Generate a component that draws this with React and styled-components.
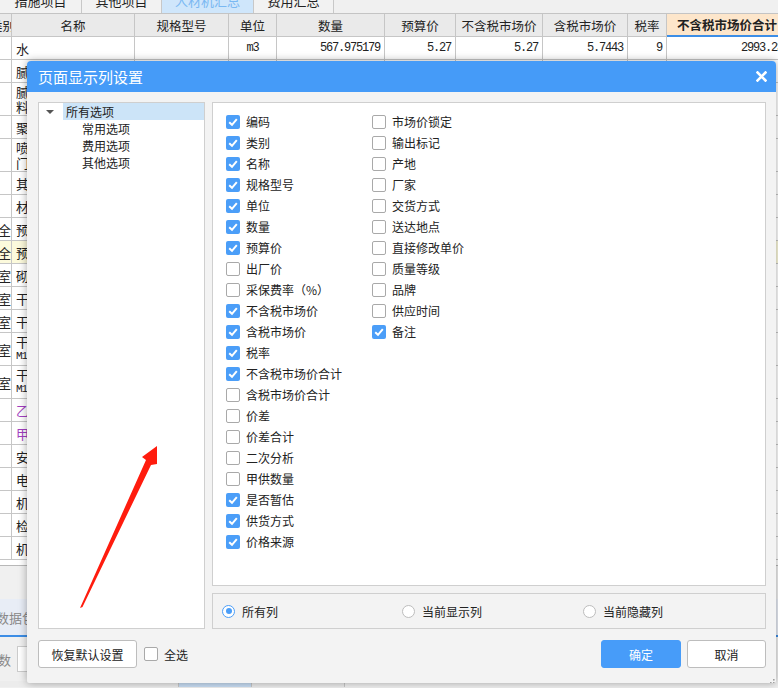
import styled, { createGlobalStyle } from "styled-components";

const GlobalStyle = createGlobalStyle`
  html, body {
    margin: 0;
    padding: 0;
    background: #f0f0f0;
  }
  body {
    font-family: "Noto Sans CJK SC", "Noto Sans", sans-serif;
    font-size: 12px;
    color: #222;
  }
`;

const COLS = "12px 123px 94px 48px 108px 71px 87px 85px 39px 121px";

const tabs = [
  { text: "措施项目", w: 82 },
  { text: "其他项目", w: 80 },
  { text: "人材机汇总", w: 92, active: true },
  { text: "费用汇总", w: 80 },
];

const headers = ["类别", "名称", "规格型号", "单位", "数量", "预算价", "不含税市场价", "含税市场价", "税率", "不含税市场价合计"];

const rows = [
  { code: "", name: ["水"], unit: "m3", qty: "567.975179", p1: "5.27", p2: "5.27", p3: "5.7443", tax: "9", total: "2993.23" },
  { code: "", name: ["腻子粉"] },
  { code: "", name: ["腻子粉", "料"], tall: true },
  { code: "", name: ["聚合物"] },
  { code: "", name: ["喷塑", "门"], tall: true },
  { code: "", name: ["其他"] },
  { code: "", name: ["材料"] },
  { code: "安全", name: ["预拌"] },
  { code: "安全", name: ["预拌"], yellow: true },
  { code: "砌筑室", name: ["砌块"] },
  { code: "砌筑室", name: ["干混"] },
  { code: "砌筑室", name: ["干混"] },
  { code: "砌筑室", name: ["干混", "M10"], tall: true },
  { code: "砌筑室", name: ["干混", "M10"], tall: true },
  { code: "", name: ["乙供"], purple: true },
  { code: "", name: ["甲供"], purple: true },
  { code: "", name: ["安全"] },
  { code: "", name: ["电"] },
  { code: "", name: ["机械"] },
  { code: "", name: ["检测"] },
  { code: "", name: ["机械"] },
];

const leftOptions = [
  ["编码", true],
  ["类别", true],
  ["名称", true],
  ["规格型号", true],
  ["单位", true],
  ["数量", true],
  ["预算价", true],
  ["出厂价", false],
  ["采保费率（%）", false],
  ["不含税市场价", true],
  ["含税市场价", true],
  ["税率", true],
  ["不含税市场价合计", true],
  ["含税市场价合计", false],
  ["价差", false],
  ["价差合计", false],
  ["二次分析", false],
  ["甲供数量", false],
  ["是否暂估", true],
  ["供货方式", true],
  ["价格来源", true],
];

const rightOptions = [
  ["市场价锁定", false],
  ["输出标记", false],
  ["产地", false],
  ["厂家", false],
  ["交货方式", false],
  ["送达地点", false],
  ["直接修改单价", false],
  ["质量等级", false],
  ["品牌", false],
  ["供应时间", false],
  ["备注", true],
];

const Check = ({ checked }) => (
  <Box $checked={checked}>
    {checked && (
      <svg width="14" height="14" viewBox="0 0 14 14">
        <polyline points="3.2,7.2 6,9.8 10.8,4.2" fill="none" stroke="#fff" strokeWidth="2" />
      </svg>
    )}
  </Box>
);

const App = () => {
  return (
    <>
      <GlobalStyle />
      <Page>
        <TabBar>
          {tabs.map((t) => (
            <Tab key={t.text} $w={t.w} $active={t.active}>
              <span>{t.text}</span>
            </Tab>
          ))}
          <TabFill />
        </TabBar>

        <Grid>
          <HeadRow>
            {headers.map((h, i) => (
              <HeadCell key={h} $hl={i === headers.length - 1} $clip={i === 0}>
                <span>{h}</span>
              </HeadCell>
            ))}
          </HeadRow>
          {rows.map((r, i) => (
            <Row key={i} $tall={r.tall} $yellow={r.yellow}>
              <Cell $right $clip>
                {r.code}
              </Cell>
              <Cell $purple={r.purple}>
                <Lines>
                  {r.name.map((n, j) => (
                    <span key={j} className={/^[A-Z0-9]/.test(n) ? "mono" : ""}>
                      {n}
                    </span>
                  ))}
                </Lines>
              </Cell>
              <Cell />
              <Cell $center $mono>
                {r.unit}
              </Cell>
              <Cell $right $mono>
                {r.qty}
              </Cell>
              <Cell $right $mono>
                {r.p1}
              </Cell>
              <Cell $right $mono>
                {r.p2}
              </Cell>
              <Cell $right $mono>
                {r.p3}
              </Cell>
              <Cell $right $mono>
                {r.tax}
              </Cell>
              <Cell $right $mono>
                {r.total}
              </Cell>
            </Row>
          ))}
        </Grid>

        <BottomArea>
          <Spacer />
          <PackBar>
            <span>数据包</span>
          </PackBar>
          <ParamRow>
            <span>数</span>
            <SmallInput />
          </ParamRow>
          <BottomTabs>
            <BottomTab $w={178} />
            <BottomTab $w={72} $active />
            <BottomTab $w={92} />
          </BottomTabs>
        </BottomArea>

        <Dialog>
          <TitleBar>
            <span>页面显示列设置</span>
            <CloseBtn>
              <svg width="11" height="11" viewBox="0 0 11 11">
                <path d="M1.5 1.5 L9.5 9.5 M9.5 1.5 L1.5 9.5" stroke="#fff" strokeWidth="2.6" strokeLinecap="square" />
              </svg>
            </CloseBtn>
          </TitleBar>
          <Body>
            <Main>
              <TreePanel>
                <TreeRoot>
                  <Caret />
                  <TreeLabel>所有选项</TreeLabel>
                </TreeRoot>
                <TreeChild>常用选项</TreeChild>
                <TreeChild>费用选项</TreeChild>
                <TreeChild>其他选项</TreeChild>
              </TreePanel>
              <RightSide>
                <OptionPanel>
                  <OptionColumn $w={146}>
                    {leftOptions.map(([label, on]) => (
                      <OptionRow key={label}>
                        <Check checked={on} />
                        <span>{label}</span>
                      </OptionRow>
                    ))}
                  </OptionColumn>
                  <OptionColumn>
                    {rightOptions.map(([label, on]) => (
                      <OptionRow key={label}>
                        <Check checked={on} />
                        <span>{label}</span>
                      </OptionRow>
                    ))}
                  </OptionColumn>
                </OptionPanel>
                <RadioPanel>
                  <RadioItem $w={180}>
                    <Radio $on />
                    <span>所有列</span>
                  </RadioItem>
                  <RadioItem $w={181}>
                    <Radio />
                    <span>当前显示列</span>
                  </RadioItem>
                  <RadioItem>
                    <Radio />
                    <span>当前隐藏列</span>
                  </RadioItem>
                </RadioPanel>
              </RightSide>
            </Main>
            <Footer>
              <Button $w={99}>恢复默认设置</Button>
              <SelectAll>
                <Check checked={false} />
                <span>全选</span>
              </SelectAll>
              <FooterRight>
                <Button $w={80} $primary>
                  确定
                </Button>
                <Button $w={79}>取消</Button>
              </FooterRight>
            </Footer>
          </Body>
          <Grip>
            <svg width="9" height="9" viewBox="0 0 9 9">
              {[
                [7, 1],
                [4, 4],
                [7, 4],
                [1, 7],
                [4, 7],
                [7, 7],
              ].map(([x, y]) => (
                <rect key={`${x}-${y}`} x={x} y={y} width="1.6" height="1.6" fill="#a0a0a0" />
              ))}
            </svg>
          </Grip>
        </Dialog>

        <Arrow width="778" height="688" viewBox="0 0 778 688">
          <polygon points="80,608 82.5,607 151,465 157,464 157,446 142,457 146,460" fill="#ff1c0e" />
        </Arrow>
      </Page>
    </>
  );
};

export default App;

const Page = styled.div`
  position: relative;
  width: 778px;
  height: 688px;
  overflow: hidden;
  background: #f0f0f0;
  display: flex;
  flex-direction: column;
`;

const TabBar = styled.div`
  display: flex;
  height: 13px;
  border-bottom: 1px solid #c4c4c4;
  background: #f0f0f0;
`;

const Tab = styled.div`
  width: ${(p) => p.$w}px;
  box-sizing: border-box;
  border-right: 1px solid #c8c8c8;
  overflow: hidden;
  background: ${(p) => (p.$active ? "#cfe6fb" : "#f2f2f2")};
  color: ${(p) => (p.$active ? "#7ab8f2" : "#222")};
  text-align: center;
  font-size: 13px;
  span {
    display: block;
    margin-top: -9px;
    line-height: 20px;
  }
`;

const TabFill = styled.div`
  flex: 1;
  background: #f0f0f0;
`;

const Grid = styled.div`
  display: flex;
  flex-direction: column;
  background: #fff;
`;

const HeadRow = styled.div`
  display: grid;
  grid-template-columns: ${COLS};
  height: 23px;
`;

const HeadCell = styled.div`
  box-sizing: border-box;
  border-right: 1px solid #c6c6c6;
  border-bottom: ${(p) => (p.$hl ? "2px solid #3d8ee6" : "1px solid #c6c6c6")};
  background: ${(p) => (p.$hl ? "#fde6cb" : "#eaeaea")};
  font-weight: ${(p) => (p.$hl ? 700 : 400)};
  font-size: 12.5px;
  display: flex;
  align-items: center;
  justify-content: ${(p) => (p.$clip ? "flex-end" : "center")};
  overflow: hidden;
  white-space: nowrap;
  span {
    margin-right: ${(p) => (p.$clip ? "-4px" : "0")};
  }
`;

const Row = styled.div`
  display: grid;
  grid-template-columns: ${COLS};
  height: ${(p) => (p.$tall ? 33 : 23)}px;
  background: ${(p) => (p.$yellow ? "#fcfadc" : "#fff")};
`;

const Cell = styled.div`
  box-sizing: border-box;
  border-right: 1px solid #c6c6c6;
  border-bottom: 1px solid #c6c6c6;
  display: flex;
  align-items: center;
  justify-content: ${(p) => (p.$right ? "flex-end" : p.$center ? "center" : "flex-start")};
  padding: ${(p) => (p.$clip ? "0" : "0 4px")};
  overflow: hidden;
  white-space: nowrap;
  font-family: ${(p) =>
    p.$mono ? '"Liberation Mono", "DejaVu Sans Mono", monospace' : '"Noto Sans CJK SC", sans-serif'};
  letter-spacing: ${(p) => (p.$mono ? "-1.2px" : "0")};
  font-size: ${(p) => (p.$mono ? "12px" : "13px")};
  color: ${(p) => (p.$purple ? "#a23fc0" : "#222")};
`;

const Lines = styled.div`
  display: flex;
  flex-direction: column;
  line-height: 15px;
  .mono {
    font-family: "Liberation Mono", monospace;
    font-size: 11px;
    letter-spacing: -1px;
  }
`;

const BottomArea = styled.div`
  flex: 1;
  display: flex;
  flex-direction: column;
  background: #f0f0f0;
  border-top: 1px solid #fff;
`;

const Spacer = styled.div`
  height: 34px;
  border-top: 4px solid #fff;
  box-shadow: inset 0 1px 0 #b8b8b8;
`;

const PackBar = styled.div`
  height: 36px;
  background: #e8edf6;
  border-bottom: 2px solid #3c8de6;
  display: flex;
  align-items: center;
  color: #888;
  font-size: 13px;
  span {
    margin-left: -4px;
  }
`;

const ParamRow = styled.div`
  height: 44px;
  display: flex;
  align-items: center;
  gap: 6px;
  color: #888;
  font-size: 13px;
  span {
    margin-left: -2px;
  }
`;

const SmallInput = styled.div`
  width: 20px;
  height: 24px;
  background: #fff;
  border: 1px solid #ccc;
`;

const BottomTabs = styled.div`
  display: flex;
  height: 6px;
`;

const BottomTab = styled.div`
  width: ${(p) => p.$w}px;
  background: ${(p) => (p.$active ? "#c9def5" : "#ececec")};
  border-right: 1px solid #c8c8c8;
`;

const Dialog = styled.div`
  position: absolute;
  left: 27px;
  top: 61px;
  width: 749px;
  height: 622px;
  background: #f3f3f3;
  border-radius: 4px 4px 2px 2px;
  box-shadow: 0 0 8px rgba(0, 0, 0, 0.35);
  display: flex;
  flex-direction: column;
  overflow: hidden;
`;

const TitleBar = styled.div`
  height: 31px;
  background: #459bf8;
  color: #fff;
  display: flex;
  align-items: center;
  justify-content: space-between;
  padding: 0 9px 0 11px;
  font-size: 15px;
`;

const CloseBtn = styled.div`
  width: 11px;
  height: 11px;
  display: flex;
`;

const Body = styled.div`
  flex: 1;
  display: flex;
  flex-direction: column;
  padding: 10px 10px 0 11px;
`;

const Main = styled.div`
  display: flex;
  gap: 7px;
  height: 527px;
`;

const TreePanel = styled.div`
  width: 167px;
  box-sizing: border-box;
  background: #fff;
  border: 1px solid #cfcfcf;
  font-size: 12px;
  line-height: 17px;
`;

const TreeRoot = styled.div`
  display: flex;
  align-items: center;
  height: 17px;
`;

const Caret = styled.div`
  width: 0;
  height: 0;
  margin: 0 9px 0 7px;
  border-left: 4px solid transparent;
  border-right: 4px solid transparent;
  border-top: 4px solid #555;
`;

const TreeLabel = styled.div`
  flex: 1;
  height: 17px;
  background: #cce4f8;
  padding-left: 3px;
`;

const TreeChild = styled.div`
  padding-left: 43px;
  height: 17px;
`;

const RightSide = styled.div`
  flex: 1;
  display: flex;
  flex-direction: column;
  gap: 7px;
`;

const OptionPanel = styled.div`
  height: 484px;
  box-sizing: border-box;
  background: #fff;
  border: 1px solid #cfcfcf;
  padding: 8px 13px;
  display: flex;
`;

const OptionColumn = styled.div`
  width: ${(p) => (p.$w ? `${p.$w}px` : "auto")};
  display: flex;
  flex-direction: column;
`;

const OptionRow = styled.div`
  display: flex;
  align-items: center;
  gap: 6px;
  height: 21px;
  font-size: 12px;
  white-space: nowrap;
`;

const Box = styled.div`
  width: 14px;
  height: 14px;
  box-sizing: border-box;
  border-radius: 2px;
  flex: none;
  display: flex;
  background: ${(p) => (p.$checked ? "#4b9ef8" : "#fff")};
  border: ${(p) => (p.$checked ? "none" : "1px solid #a9a9a9")};
`;

const RadioPanel = styled.div`
  height: 36px;
  box-sizing: border-box;
  border: 1px solid #cfcfcf;
  display: flex;
  align-items: center;
  padding-left: 9px;
  font-size: 12px;
`;

const RadioItem = styled.div`
  width: ${(p) => (p.$w ? `${p.$w}px` : "auto")};
  display: flex;
  align-items: center;
  gap: 7px;
`;

const Radio = styled.div`
  width: 13px;
  height: 13px;
  box-sizing: border-box;
  border-radius: 50%;
  border: 1px solid ${(p) => (p.$on ? "#4b9ef8" : "#bdbdbd")};
  background: #fff;
  display: flex;
  align-items: center;
  justify-content: center;
  &::after {
    content: "";
    width: 6px;
    height: 6px;
    border-radius: 50%;
    background: ${(p) => (p.$on ? "#4b9ef8" : "transparent")};
  }
`;

const Footer = styled.div`
  display: flex;
  align-items: center;
  margin-top: 11px;
  height: 28px;
`;

const Button = styled.div`
  width: ${(p) => p.$w}px;
  height: 28px;
  box-sizing: border-box;
  border-radius: 3px;
  border: 1px solid ${(p) => (p.$primary ? "#479cf9" : "#bdbdbd")};
  background: ${(p) => (p.$primary ? "#479cf9" : "#fff")};
  color: ${(p) => (p.$primary ? "#fff" : "#222")};
  display: flex;
  align-items: center;
  justify-content: center;
  font-size: 12px;
`;

const SelectAll = styled.div`
  display: flex;
  align-items: center;
  gap: 6px;
  margin-left: 7px;
  font-size: 12px;
`;

const FooterRight = styled.div`
  margin-left: auto;
  display: flex;
  gap: 6px;
`;

const Grip = styled.div`
  position: absolute;
  right: 1px;
  bottom: 1px;
  width: 9px;
  height: 9px;
`;

const Arrow = styled.svg`
  position: absolute;
  left: 0;
  top: 0;
  pointer-events: none;
`;
